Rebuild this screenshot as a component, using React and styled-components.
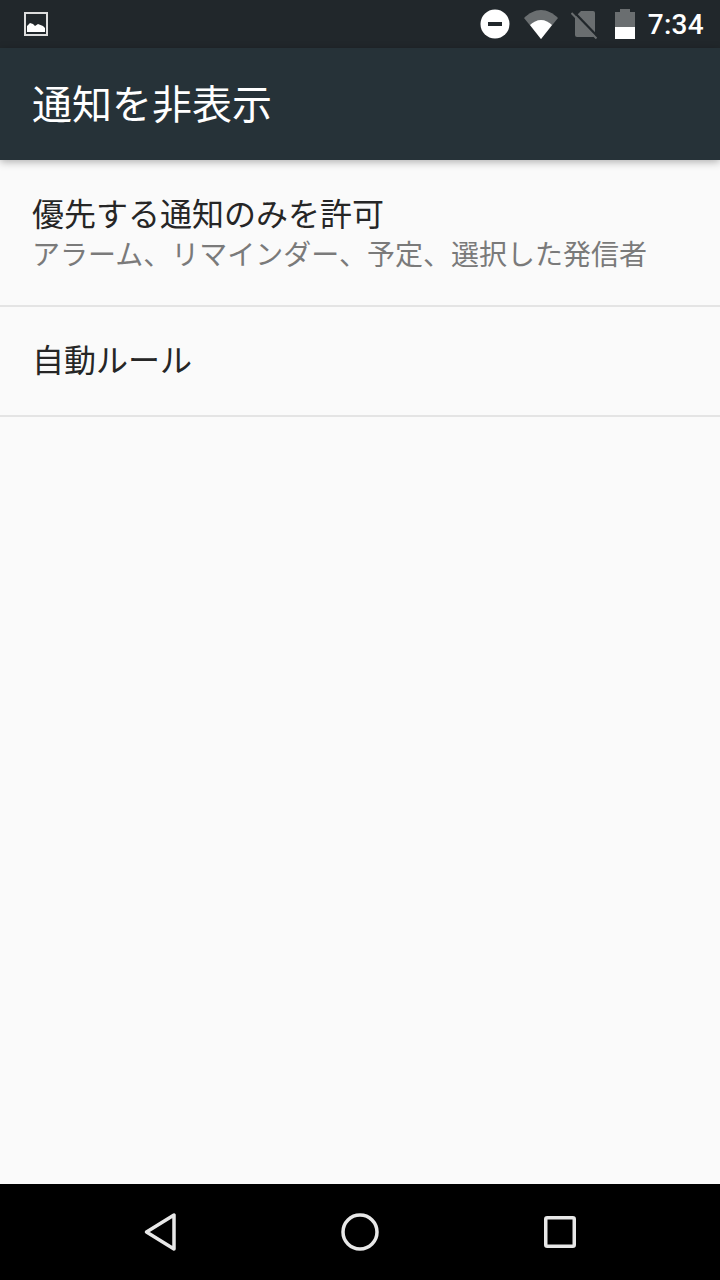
import styled, { createGlobalStyle } from 'styled-components'

const GlobalStyle = createGlobalStyle`
  html, body {
    margin: 0;
    padding: 0;
    background: #fafafa;
  }
  body {
    font-family: "Noto Sans CJK JP", "Roboto", sans-serif;
  }
`
const Screen = styled.div`
  width: 720px;
  height: 1280px;
  display: flex;
  flex-direction: column;
  overflow: hidden;
  background: #fafafa;
`
const StatusBar = styled.div`
  height: 48px;
  flex: none;
  display: flex;
  align-items: center;
  justify-content: space-between;
  padding: 0 16px 0 24px;
  background: #21272b;
`
const StatusIcons = styled.div`
  display: flex;
  align-items: center;
`
const Clock = styled.span`
  font-family: Roboto, sans-serif;
  font-size: 28px;
  font-weight: 500;
  letter-spacing: 0.3px;
  color: #fff;
  margin-left: 13px;
`
const Toolbar = styled.header`
  height: 112px;
  flex: none;
  box-sizing: border-box;
  display: flex;
  align-items: center;
  padding: 0 32px 4px;
  background: #263238;
  box-shadow: 0 2px 8px rgba(0, 0, 0, 0.3);
  position: relative;
`
const Title = styled.h1`
  margin: 0;
  font-size: 40px;
  font-weight: 400;
  line-height: 1;
  color: #fff;
`
const List = styled.main`
  flex: 1;
`
const Row = styled.div`
  height: ${(p) => p.$height}px;
  box-sizing: border-box;
  padding: ${(p) => p.$top}px 32px 0;
  border-bottom: 2px solid #e4e4e4;
`
const RowTitle = styled.div`
  font-size: 32px;
  line-height: 40px;
  color: #262626;
`
const RowSummary = styled.div`
  font-size: 28px;
  line-height: 40px;
  margin-top: 1px;
  color: #7a7a7a;
`
const NavBar = styled.nav`
  height: 96px;
  flex: none;
  display: flex;
  align-items: center;
  padding: 0 60px;
  background: #000;
`
const NavSlot = styled.div`
  flex: 1;
  display: flex;
  justify-content: center;
`
const WifiIcon = styled.svg`
  margin-left: 14px;
`
const SimIcon = styled.svg`
  margin-left: 13px;
`
const BatteryIcon = styled.svg`
  margin-left: 16px;
`

export default function App() {
  return (
    <Screen>
      <GlobalStyle />
      <StatusBar>
        <svg width="24" height="24" viewBox="0 0 24 24">
          <rect x="1" y="1" width="22" height="22" fill="none" stroke="#ddd" strokeWidth="2" />
          <path d="M3 20v-6l3-3 3 1 2 2 3-2 5 2 2 2v4z" fill="#fff" />
        </svg>
        <StatusIcons>
          <svg width="30" height="30" viewBox="0 0 30 30">
            <circle cx="15" cy="15" r="14.5" fill="#fff" />
            <rect x="8" y="13" width="14" height="4" fill="#21272b" />
          </svg>
          <WifiIcon width="34" height="30" viewBox="0 0 34 30">
            <path d="M0 9C5 4 11 1 17 1s12 3 17 8L17 30z" fill="#6a6e70" />
            <path d="M6 16c3-3 7-5 11-5s8 2 11 5L17 30z" fill="#fff" />
          </WifiIcon>
          <SimIcon width="28" height="30" viewBox="0 0 28 30">
            <path d="M10 2h12a2 2 0 0 1 2 2v22a2 2 0 0 1-2 2H6a2 2 0 0 1-2-2V8z" fill="#6a6e70" />
            <path d="M2 2l25 26" stroke="#21272b" strokeWidth="2.5" />
            <path d="M0.5 4l25 25.5" stroke="#6a6e70" strokeWidth="2" />
          </SimIcon>
          <BatteryIcon width="20" height="30" viewBox="0 0 20 30">
            <path d="M5 0h10v3h5v15H0V3h5z" fill="#6a6e70" />
            <rect x="0" y="18" width="20" height="12" fill="#fff" />
          </BatteryIcon>
          <Clock>7:34</Clock>
        </StatusIcons>
      </StatusBar>
      <Toolbar>
        <Title>通知を非表示</Title>
      </Toolbar>
      <List>
        <Row $height={147} $top={32}>
          <RowTitle>優先する通知のみを許可</RowTitle>
          <RowSummary>アラーム、リマインダー、予定、選択した発信者</RowSummary>
        </Row>
        <Row $height={110} $top={31}>
          <RowTitle>自動ルール</RowTitle>
        </Row>
      </List>
      <NavBar>
        <NavSlot>
          <svg width="40" height="40" viewBox="0 0 40 40">
            <path d="M34 3v34L6.5 20z" fill="none" stroke="#e8e8e8" strokeWidth="3.5" strokeLinejoin="round" />
          </svg>
        </NavSlot>
        <NavSlot>
          <svg width="40" height="40" viewBox="0 0 40 40">
            <circle cx="20" cy="20" r="17" fill="none" stroke="#e8e8e8" strokeWidth="3.5" />
          </svg>
        </NavSlot>
        <NavSlot>
          <svg width="40" height="40" viewBox="0 0 40 40">
            <rect x="5.75" y="5.75" width="28.5" height="28.5" rx="1.5" fill="none" stroke="#e8e8e8" strokeWidth="3.5" />
          </svg>
        </NavSlot>
      </NavBar>
    </Screen>
  )
}
